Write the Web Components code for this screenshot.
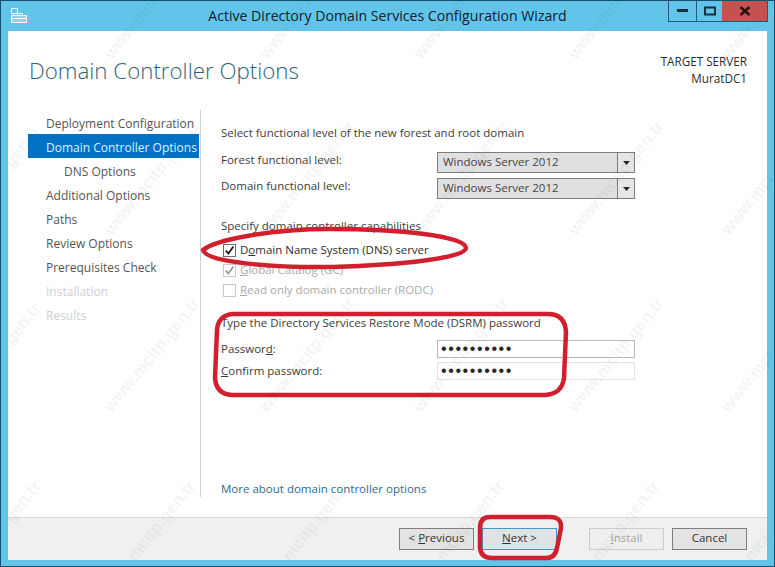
<!DOCTYPE html>
<html>
<head>
<meta charset="utf-8">
<title>Active Directory Domain Services Configuration Wizard</title>
<style>
  html, body { margin: 0; padding: 0; background: #62c4e8; }
  body { font: 11.5px/16px "Open Sans", "Liberation Sans", sans-serif; color: #333; overflow: hidden; }
</style>
</head>
<body>
<wizard-window>
  <wizard-titlebar slot="top">Active Directory Domain Services Configuration Wizard</wizard-titlebar>
  <wizard-header slot="top" server="MuratDC1">Domain Controller Options</wizard-header>

  <wizard-nav slot="nav">
    <nav-item>Deployment Configuration</nav-item>
    <nav-item active>Domain Controller Options</nav-item>
    <nav-item nested>DNS Options</nav-item>
    <nav-item>Additional Options</nav-item>
    <nav-item>Paths</nav-item>
    <nav-item>Review Options</nav-item>
    <nav-item>Prerequisites Check</nav-item>
    <nav-item disabled>Installation</nav-item>
    <nav-item disabled>Results</nav-item>
  </wizard-nav>

  <options-page slot="page">
    <span slot="levels-title">Select functional level of the new forest and root domain</span>
    <span slot="forest-label">Forest functional level:</span>
    <wizard-combo slot="forest">Windows Server 2012</wizard-combo>
    <span slot="domain-label">Domain functional level:</span>
    <wizard-combo slot="domain">Windows Server 2012</wizard-combo>
    <span slot="caps-title">Specify domain controller capabilities</span>
    <wizard-check slot="caps" checked>D<u>o</u>main Name System (DNS) server</wizard-check>
    <wizard-check slot="caps" checked disabled><u>G</u>lobal Catalog (GC)</wizard-check>
    <wizard-check slot="caps" disabled><u>R</u>ead only domain controller (RODC)</wizard-check>
    <span slot="dsrm-title">Type the Directory Services Restore Mode (DSRM) password</span>
    <span slot="pw-label">Passwor<u>d</u>:</span>
    <wizard-password slot="pw"></wizard-password>
    <span slot="confirm-label"><u>C</u>onfirm password:</span>
    <wizard-password slot="confirm" dim></wizard-password>
    <span slot="link">More about domain controller options</span>
  </options-page>

  <wizard-footer slot="footer">
    <wizard-button>&lt; <u>P</u>revious</wizard-button>
    <wizard-button default><u>N</u>ext &gt;</wizard-button>
    <wizard-button disabled class="after-gap"><u>I</u>nstall</wizard-button>
    <wizard-button>Cancel</wizard-button>
  </wizard-footer>

  <watermark-layer slot="overlay"></watermark-layer>
  <ink-marks slot="overlay"></ink-marks>
</wizard-window>

<script>
// small helper, every element just stamps its html in an open shadow root
function stamp(host, html) {
  host.attachShadow({ mode: "open" }).innerHTML = html;
}

class WizardWindow extends HTMLElement {
  constructor() {
    super();
    stamp(this, `
      <style>
        :host { display: flex; flex-direction: column; position: relative; box-sizing: border-box;
                width: 775px; height: 567px; background: #62c4e8; border: 1px solid #14506e; overflow: hidden; }
        .row { flex: 1; display: flex; min-height: 0; margin: 0 7px; background: #fff; }
        .spacer { height: 20px; flex: none; margin: 0 7px; background: #fff; }
        .footer { flex: none; margin: 0 7px 6px; }
      </style>
      <slot name="top"></slot>
      <div class="row"><slot name="nav"></slot><slot name="page"></slot></div>
      <div class="spacer"></div>
      <div class="footer"><slot name="footer"></slot></div>
      <slot name="overlay"></slot>
    `);
  }
}

class WizardTitlebar extends HTMLElement {
  constructor() {
    super();
    stamp(this, `
      <style>
        :host { display: grid; grid-template-columns: 1fr auto 1fr; height: 30px; flex: none; color: #0d2230; font-size: 14.1px; }
        .icon { padding: 6px 0 0 9px; }
        .title { line-height: 30px; white-space: nowrap; }
        .caption { justify-self: end; display: flex; height: 21px; margin-right: 6px; border: 1px solid #1d5d7d; border-top: 0; box-sizing: border-box; }
        .caption div { display: flex; align-items: center; justify-content: center; box-sizing: border-box; }
        .min { width: 28px; border-right: 1px solid #1d5d7d; }
        .max { width: 25px; }
        .close { width: 45px; background: #c75050; }
      </style>
      <div class="icon">
        <svg width="18" height="17" viewBox="0 0 18 17" fill="none" stroke="#fff" stroke-width="1">
          <path d="M1.5 1.5h6v5h-6z"/>
          <path d="M3.5 6.5v2"/>
          <path d="M1.5 8.5h15v7h-15z" fill="rgba(255,255,255,.25)"/>
          <path d="M7.5 8.5v-2h5v2M1.5 11.5h15M9 10.5v2"/>
        </svg>
      </div>
      <div class="title"><slot></slot></div>
      <div class="caption">
        <div class="min"><svg width="11" height="4"><rect y="0" width="11" height="3" fill="#12303f"/></svg></div>
        <div class="max"><svg width="12" height="10" fill="none" stroke="#12303f"><rect x="1" y="1.5" width="10" height="7" stroke-width="2"/></svg></div>
        <div class="close"><svg width="12" height="10" fill="none" stroke="#2b1012" stroke-width="2.4"><path d="M1.5 1l9 8M10.5 1l-9 8"/></svg></div>
      </div>
    `);
  }
}

class WizardHeader extends HTMLElement {
  constructor() {
    super();
    stamp(this, `
      <style>
        :host { display: flex; justify-content: space-between; height: 79px; flex: none; margin: 0 7px; background: #fff; }
        h1 { margin: 0; padding: 24px 0 0 21px; font-size: 22.3px; line-height: 32px; font-weight: 300; color: #2f6379; white-space: nowrap; }
        .server { padding: 22px 20px 0 0; text-align: right; line-height: 16.5px; font-size: 11.7px; color: #2c2c2c; }
      </style>
      <h1><slot></slot></h1>
      <div class="server">TARGET SERVER<br>${this.getAttribute("server")}</div>
    `);
  }
}

class WizardNav extends HTMLElement {
  constructor() {
    super();
    stamp(this, `
      <style>
        :host { display: flex; flex-direction: column; box-sizing: border-box; width: 193px; flex: none; padding: 0 1px 0 20px; border-right: 1px solid #cfcfcf; }
      </style>
      <slot></slot>
    `);
  }
}

class NavItem extends HTMLElement {
  constructor() {
    super();
    stamp(this, `
      <style>
        :host { display: block; height: 24px; line-height: 27px; padding-left: 18px; font-size: 12px; color: #555; white-space: nowrap; }
        :host([nested]) { padding-left: 36px; }
        :host([active]) { background: #0072c6; color: #d8f2ff; }
        :host([disabled]) { color: #cfcfcf; }
      </style>
      <slot></slot>
    `);
  }
}

class OptionsPage extends HTMLElement {
  constructor() {
    super();
    stamp(this, `
      <style>
        :host { display: flex; flex-direction: column; flex: 1; padding: 15px 0 0 20px; min-width: 0; color: #3c3c3c; }
        .t { height: 16px; line-height: 16px; }
        .grid { display: grid; grid-template-columns: 216px 198px; align-items: center; }
        .levels { margin-top: 11px; grid-auto-rows: 21px; row-gap: 5px; }
        .levels .lbl { padding-bottom: 6px; }
        .pw { margin-top: 9px; grid-auto-rows: 18px; row-gap: 4px; }
        .caps { display: flex; flex-direction: column; margin-top: 6px; }
        .title2 { margin-top: 19px; }
        .title3 { margin-top: 15px; }
        .link { margin-top: auto; height: 14px; line-height: 12px; color: #2c6c94; }
      </style>
      <div class="t"><slot name="levels-title"></slot></div>
      <div class="grid levels">
        <div class="lbl"><slot name="forest-label"></slot></div><slot name="forest"></slot>
        <div class="lbl"><slot name="domain-label"></slot></div><slot name="domain"></slot>
      </div>
      <div class="t title2"><slot name="caps-title"></slot></div>
      <div class="caps"><slot name="caps"></slot></div>
      <div class="t title3"><slot name="dsrm-title"></slot></div>
      <div class="grid pw">
        <div class="t"><slot name="pw-label"></slot></div><slot name="pw"></slot>
        <div class="t"><slot name="confirm-label"></slot></div><slot name="confirm"></slot>
      </div>
      <div class="link"><slot name="link"></slot></div>
    `);
  }
}

class WizardCombo extends HTMLElement {
  constructor() {
    super();
    stamp(this, `
      <style>
        :host { display: flex; box-sizing: border-box; height: 21px; border: 1px solid #7d7d7d; background: #e0e0e0; color: #444; }
        .val { flex: 1; padding-left: 5px; line-height: 18px; }
        .arrow { width: 16px; border-left: 1px solid #7d7d7d; display: flex; align-items: center; justify-content: center; background: #e6e6e6; }
      </style>
      <div class="val"><slot></slot></div>
      <div class="arrow"><svg width="7" height="4"><path d="M0 0h7L3.5 4z" fill="#2a2a2a"/></svg></div>
    `);
  }
}

class WizardCheck extends HTMLElement {
  constructor() {
    super();
    const tick = this.hasAttribute("checked") ? `<svg width="11" height="11" viewBox="0 0 11 11" fill="none" stroke="currentColor" stroke-width="1.8"><path d="M1.8 5.5l2.6 3 5-7"/></svg>` : "";
    stamp(this, `
      <style>
        :host { display: flex; align-items: center; height: 20px; color: #2c2c2c; white-space: nowrap; }
        :host([disabled]) { color: #a9a9a9; }
        .box { box-sizing: border-box; width: 13px; height: 13px; margin: 0 4px 0 2px; border: 1px solid #6f6f6f; display: flex; align-items: center; justify-content: center; color: #1a1a1a; }
        :host([disabled]) .box { border-color: #c8c8c8; color: #9a9a9a; }
        .txt { height: 16px; line-height: 16px; }
      </style>
      <div class="box">${tick}</div>
      <div class="txt"><slot></slot></div>
    `);
  }
}

class WizardPassword extends HTMLElement {
  constructor() {
    super();
    stamp(this, `
      <style>
        :host { display: block; box-sizing: border-box; height: 18px; border: 1px solid #b9b9b9; background: #fff; padding-left: 3px;
                font: 16px/16px "Liberation Sans", sans-serif; letter-spacing: 1.6px; color: #262626; }
        :host([dim]) { border-color: #e2e2e2; }
      </style>
      ••••••••••
    `);
  }
}

class WizardFooter extends HTMLElement {
  constructor() {
    super();
    stamp(this, `
      <style>
        :host { display: flex; justify-content: flex-end; gap: 8px; box-sizing: border-box; height: 43px; flex: none; padding: 10px 20px 0 0;
                border-top: 1px solid #d9d9d9; background: #f0f0f0; }
        ::slotted(.after-gap) { margin-left: 24px; }
      </style>
      <slot></slot>
    `);
  }
}

class WizardButton extends HTMLElement {
  constructor() {
    super();
    stamp(this, `
      <style>
        :host { display: flex; align-items: center; justify-content: center; box-sizing: border-box; width: 75px; height: 22px; padding-bottom: 2px;
                border: 1px solid #7f7f7f; background: #e3e3e3; color: #333; white-space: nowrap; }
        :host([default]) { border-color: #3f9bc4; background: #dfe3e5; }
        :host([disabled]) { border-color: #cdcdcd; background: #efefef; color: #a6a6a6; }
      </style>
      <div><slot></slot></div>
    `);
  }
}

// diagonal site stamp over the whole picture, only the letters that land inside the window
class WatermarkLayer extends HTMLElement {
  constructor() {
    super();
    const text = "www.mcitp.gen.tr";
    const step = 9.2, dx = Math.cos(51 * Math.PI / 180), dy = Math.sin(51 * Math.PI / 180);
    const inside = (x, y) => x > 4 && x < 770 && y > 4 && y < 563;
    let marks = "";
    for (const y of [57, 233, 410, 588]) {
      for (const x of [-47, 108, 263, 417, 572, 725]) {
        let first = -1, last = -1;
        for (let i = 0; i < text.length; i++) {
          if (inside(x + i * step * dx, y - i * step * dy) && inside(x + (i + 1) * step * dx, y - (i + 1) * step * dy)) {
            if (first < 0) first = i;
            last = i;
          }
        }
        if (first < 0) continue;
        const left = x + first * step * dx, top = y - first * step * dy;
        marks += `<span style="left:${left.toFixed(1)}px;top:${(top - 10).toFixed(1)}px">${text.slice(first, last + 1)}</span>`;
      }
    }
    stamp(this, `
      <style>
        :host { display: block; position: absolute; inset: -1px; overflow: hidden; pointer-events: none; }
        span { position: absolute; height: 20px; transform-origin: 0 50%; transform: rotate(-51deg); white-space: nowrap;
               font: bold 17px/20px "Liberation Sans", sans-serif; color: rgba(90, 90, 90, .08); }
      </style>
      ${marks}
    `);
  }
}

// red hand drawn marks, drawn over the screenshot
class InkMarks extends HTMLElement {
  constructor() {
    super();
    stamp(this, `
      <style>
        :host { display: block; position: absolute; inset: -1px; pointer-events: none; }
        svg { display: block; }
      </style>
      <svg width="775" height="567" fill="none" stroke="#d21f2d" stroke-width="4.5" stroke-linejoin="round">
        <path d="M203 250C215 240 270 229 330 229C400 229 465 236 466 248C466 258 400 265 333 267C270 268 206 262 203 250Z"/>
        <path d="M232 314H548Q565 314 566 332L564 378Q562 394 545 395H232Q216 394 215 378L217 330Q218 316 232 314Z"/>
        <path d="M490 517H550Q562 517 561 528L557 548Q555 559 544 558H492Q481 558 480 548L480 528Q480 517 490 517Z"/>
      </svg>
    `);
  }
}

customElements.define("wizard-window", WizardWindow);
customElements.define("wizard-titlebar", WizardTitlebar);
customElements.define("wizard-header", WizardHeader);
customElements.define("wizard-nav", WizardNav);
customElements.define("nav-item", NavItem);
customElements.define("options-page", OptionsPage);
customElements.define("wizard-combo", WizardCombo);
customElements.define("wizard-check", WizardCheck);
customElements.define("wizard-password", WizardPassword);
customElements.define("wizard-footer", WizardFooter);
customElements.define("wizard-button", WizardButton);
customElements.define("watermark-layer", WatermarkLayer);
customElements.define("ink-marks", InkMarks);
</script>
</body>
</html>
